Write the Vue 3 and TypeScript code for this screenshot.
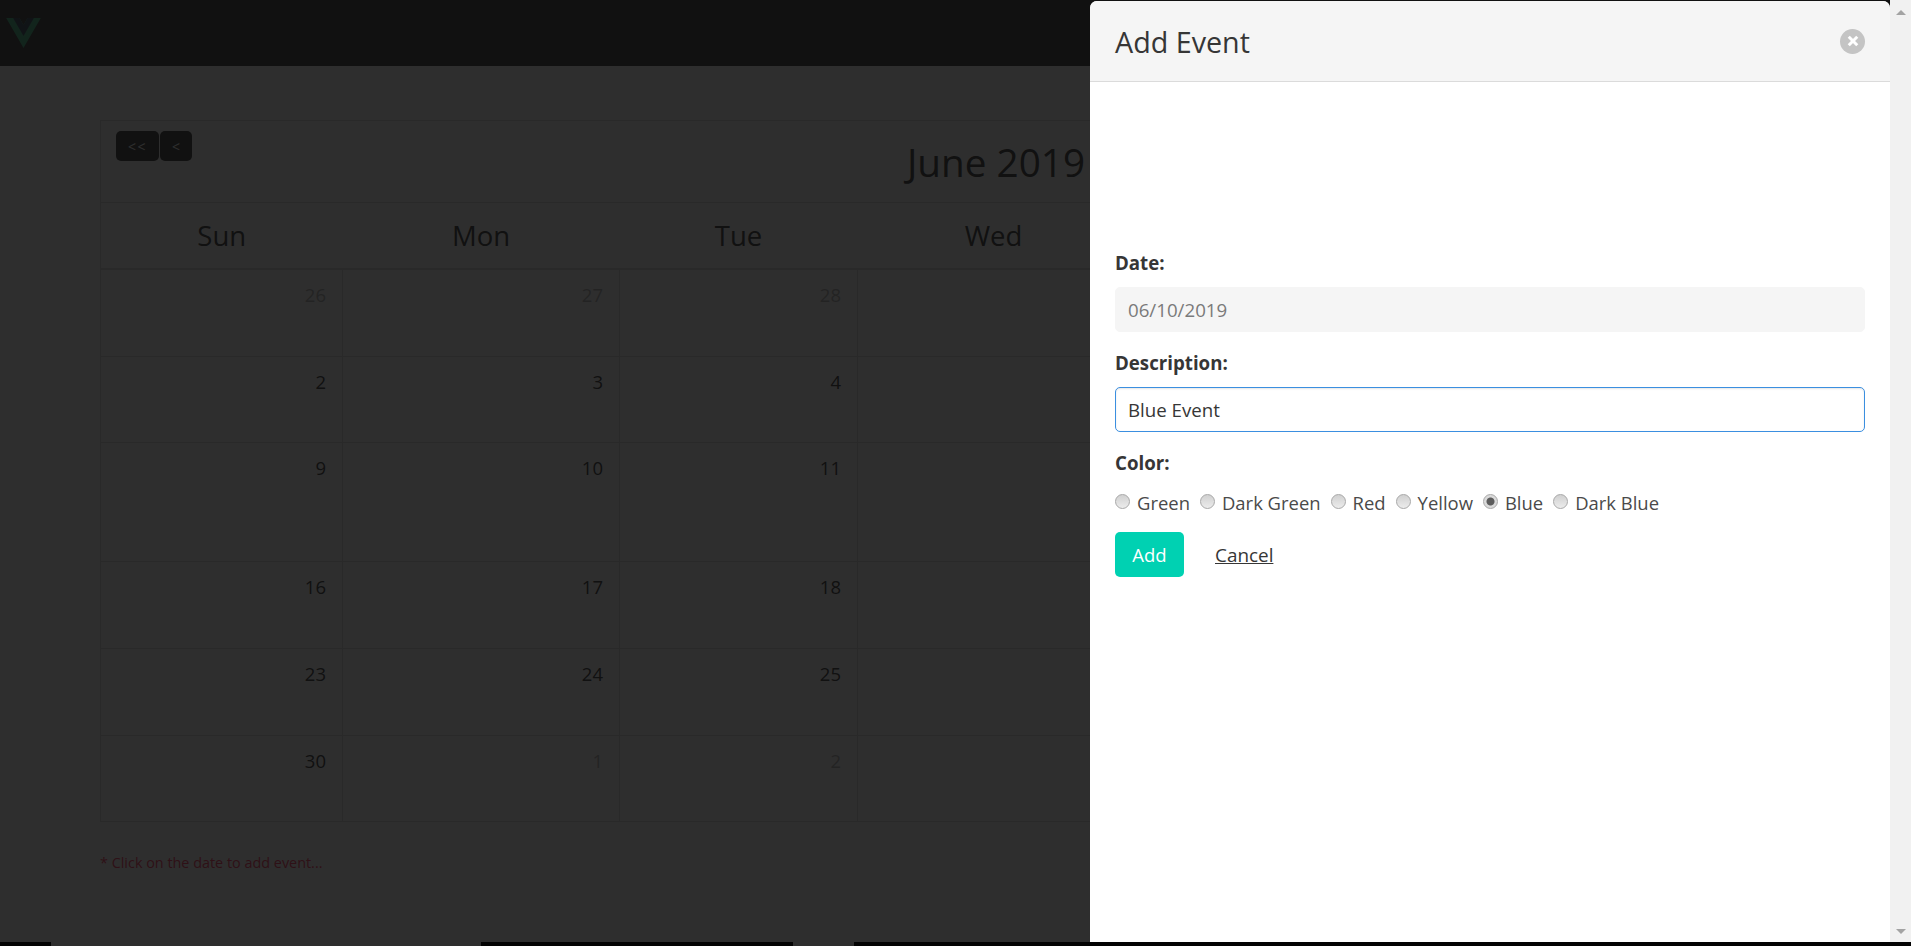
<script setup lang="ts">
const days = ['Sun', 'Mon', 'Tue', 'Wed', 'Thu', 'Fri', 'Sat']

const weeks: { day: number; muted: boolean }[][] = []
let cell: { day: number; muted: boolean }[] = []
for (let i = 0; i < 42; i++) {
  const date = new Date(2019, 4, 26 + i)
  cell.push({ day: date.getDate(), muted: date.getMonth() !== 5 })
  if (cell.length === 7) {
    weeks.push(cell)
    cell = []
  }
}

const colors = ['Green', 'Dark Green', 'Red', 'Yellow', 'Blue', 'Dark Blue']
</script>

<template>
  <div class="screen">
    <div class="viewport">
      <nav class="navbar">
        <svg class="logo" viewBox="0 0 261.76 226.69" aria-label="Vue">
          <path d="M161.096.001l-30.225 52.351L100.647.001H-.005l130.876 226.688L261.749.001z" fill="#41b883" />
          <path d="M161.096.001l-30.225 52.351L100.647.001H52.346l78.525 136.01L209.398.001z" fill="#34495e" />
        </svg>
      </nav>

      <main class="content">
        <table class="calendar">
          <colgroup>
            <col v-for="d in days" :key="d" />
          </colgroup>
          <thead>
            <tr>
              <th colspan="7" class="calendar__head">
                <div class="calendar__bar">
                  <div class="calendar__nav">
                    <button class="nav-btn nav-btn--wide" type="button">&lt;&lt;</button>
                    <button class="nav-btn" type="button">&lt;</button>
                  </div>
                  <h2 class="calendar__title">June 2019</h2>
                </div>
              </th>
            </tr>
            <tr class="calendar__days">
              <th v-for="d in days" :key="d">{{ d }}</th>
            </tr>
          </thead>
          <tbody>
            <tr v-for="(week, w) in weeks" :key="w">
              <td v-for="c in week" :key="c.day" :class="{ muted: c.muted }">{{ c.day }}</td>
            </tr>
          </tbody>
        </table>
        <p class="hint">* Click on the date to add event...</p>
      </main>

      <div class="modal">
        <div class="modal__background"></div>
        <section class="modal__card">
          <header class="modal__head">
            <p class="modal__title">Add Event</p>
            <button class="modal__close" type="button" aria-label="close"></button>
          </header>
          <div class="modal__body">
            <label class="label">Date:</label>
            <input class="input" type="text" value="06/10/2019" disabled />
            <label class="label">Description:</label>
            <input class="input input--focus" type="text" value="Blue Event" />
            <label class="label">Color:</label>
            <div class="radios">
              <label v-for="c in colors" :key="c" class="radio">
                <input type="radio" name="color" :checked="c === 'Blue'" />
                <span>{{ c }}</span>
              </label>
            </div>
            <div class="actions">
              <button class="add" type="button">Add</button>
              <a class="cancel" href="#">Cancel</a>
            </div>
          </div>
        </section>
        <div class="scrollbar">
          <span class="scrollbar__up"></span>
          <span class="scrollbar__down"></span>
        </div>
      </div>
    </div>

    <div class="strip">
      <span class="strip__dark strip__a"></span>
      <span class="strip__grey strip__b"></span>
      <span class="strip__dark strip__c"></span>
      <span class="strip__grey strip__d"></span>
      <span class="strip__dark strip__e"></span>
    </div>
  </div>
</template>

<style>
html,
body {
  margin: 0;
  overflow: hidden;
  background: #000;
}
</style>

<style scoped>
.screen {
  width: 1911px;
  height: 946px;
  display: flex;
  flex-direction: column;
  overflow: hidden;
  font-family: 'Open Sans', 'Noto Sans', sans-serif;
  color: #363636;
}

.viewport {
  position: relative;
  height: 942px;
  overflow: hidden;
  background: #fff;
}

.navbar {
  height: 66px;
  box-sizing: border-box;
  padding: 18px 0 0 6px;
  background: #363636;
}

.logo {
  display: block;
  width: 35px;
  height: 30px;
}

.content {
  padding: 54px 0 0 100px;
}

.calendar {
  width: 1690px;
  table-layout: fixed;
  border-collapse: collapse;
}

.calendar col:nth-child(1) { width: 242px; }
.calendar col:nth-child(2) { width: 277px; }
.calendar col:nth-child(3) { width: 238px; }
.calendar col:nth-child(4) { width: 272px; }

.calendar__head {
  height: 81px;
  padding: 0;
  border: 1px solid #dbdbdb;
  vertical-align: top;
  font-weight: 400;
}

.calendar__bar {
  display: flex;
  padding: 10px 15px 0;
}

.calendar__nav {
  display: flex;
  gap: 1px;
}

.nav-btn {
  width: 32px;
  height: 30px;
  padding: 0;
  border: 0;
  border-radius: 5px;
  background: #363636;
  color: #fff;
  font: 14px 'Open Sans', sans-serif;
}

.nav-btn--wide {
  width: 43px;
  letter-spacing: 1.5px;
}

.calendar__title {
  flex: 1;
  margin: 5px 0 0;
  padding-left: 26px;
  text-align: center;
  font-size: 38.7px;
  line-height: 52px;
  font-weight: 400;
}

.calendar__days th {
  height: 65px;
  padding: 0;
  border: 1px solid #dbdbdb;
  border-width: 0 0 2px;
  font-size: 27.5px;
  font-weight: 400;
}

.calendar__days {
  border-left: 1px solid #dbdbdb;
  border-right: 1px solid #dbdbdb;
}

.calendar td {
  padding: 10px 16px 0;
  border: 1px solid #dbdbdb;
  vertical-align: top;
  text-align: right;
  font-size: 18.5px;
  line-height: 30px;
}

.calendar tbody tr:nth-child(1) td { height: 76px; }
.calendar tbody tr:nth-child(2) td { height: 75px; }
.calendar tbody tr:nth-child(3) td { height: 108px; }
.calendar tbody tr:nth-child(4) td { height: 76px; }
.calendar tbody tr:nth-child(5) td { height: 76px; }
.calendar tbody tr:nth-child(6) td { height: 75px; }

.calendar td.muted {
  color: #b5b5b5;
}

.hint {
  margin: 31px 0 0;
  font-size: 14.4px;
  line-height: 20px;
  color: #ff3860;
}

.modal {
  position: absolute;
  inset: 0;
  display: flex;
  justify-content: flex-end;
}

.modal__background {
  position: absolute;
  inset: 0;
  background: rgba(10, 10, 10, 0.855);
}

.modal__card {
  position: relative;
  width: 800px;
  margin-top: 1px;
  display: flex;
  flex-direction: column;
  background: #fff;
  border-radius: 7px 7px 0 0;
  overflow: hidden;
}

.modal__head {
  height: 81px;
  flex: none;
  box-sizing: border-box;
  display: flex;
  align-items: center;
  justify-content: space-between;
  padding: 0 25px;
  background: #f5f5f5;
  border-bottom: 1px solid #dbdbdb;
}

.modal__title {
  margin: 2px 0 0;
  font-size: 28.7px;
  line-height: 36px;
  color: #363636;
}

.modal__close {
  position: relative;
  width: 25px;
  height: 25px;
  padding: 0;
  border: 0;
  border-radius: 50%;
  background: #c4c4c4;
}

.modal__close::before,
.modal__close::after {
  content: '';
  position: absolute;
  top: 50%;
  left: 50%;
  width: 12px;
  height: 3px;
  background: #fff;
  transform: translate(-50%, -50%) rotate(45deg);
}

.modal__close::after {
  transform: translate(-50%, -50%) rotate(-45deg);
}

.modal__body {
  padding: 168px 25px 0;
  display: flex;
  flex-direction: column;
}

.label {
  display: block;
  height: 25px;
  margin-bottom: 12px;
  font-size: 18.7px;
  line-height: 25px;
  font-weight: 700;
}

.input {
  height: 45px;
  box-sizing: border-box;
  width: 100%;
  margin-bottom: 18px;
  padding: 0 12px;
  border: 1px solid #f5f5f5;
  border-radius: 5px;
  background: #f5f5f5;
  color: #7a7a7a;
  font: 18.7px 'Open Sans', sans-serif;
  outline: 0;
}

.input--focus {
  background: #fff;
  border-color: #3b8fe0;
  color: #363636;
  box-shadow: inset 0 1px 2px rgba(10, 10, 10, 0.1);
}

.radios {
  display: flex;
  gap: 10px;
  height: 30px;
  align-items: center;
}

.radio {
  display: inline-flex;
  align-items: center;
  gap: 7px;
  font-size: 18.45px;
  line-height: 25px;
  color: #4a4a4a;
}

.radio input {
  appearance: none;
  width: 15px;
  height: 15px;
  margin: 0 0 2px;
  flex: none;
  box-sizing: border-box;
  border: 1px solid #a8a8a8;
  border-radius: 50%;
  background: linear-gradient(180deg, #d0d0d0, #ececec);
}

.radio input:checked {
  background: radial-gradient(circle, #5c5c5c 0 3.5px, #dadada 4.5px);
}

.actions {
  display: flex;
  align-items: center;
  gap: 31px;
  margin-top: 15px;
}

.add {
  width: 69px;
  height: 45px;
  padding: 0;
  border: 0;
  border-radius: 5px;
  background: #00d1b2;
  color: #fff;
  font: 18.5px 'Open Sans', sans-serif;
}

.cancel {
  color: #363636;
  font-size: 18.9px;
  text-decoration: underline;
}

.scrollbar {
  position: relative;
  width: 21px;
  display: flex;
  flex-direction: column;
  justify-content: space-between;
  align-items: center;
  padding: 10px 0 8px;
  box-sizing: border-box;
  background: #f1f1f1;
}

.scrollbar__up,
.scrollbar__down {
  width: 0;
  height: 0;
  border-left: 5px solid transparent;
  border-right: 5px solid transparent;
}

.scrollbar__up {
  border-bottom: 5px solid #a3a3a3;
}

.scrollbar__down {
  border-top: 5px solid #a3a3a3;
}

.strip {
  display: flex;
  height: 4px;
}

.strip__dark { background: #030303; }
.strip__grey { background: #2e2e2e; }
.strip__a { width: 51px; }
.strip__b { width: 430px; }
.strip__c { width: 312px; }
.strip__d { width: 61px; }
.strip__e { flex: 1; }
</style>
